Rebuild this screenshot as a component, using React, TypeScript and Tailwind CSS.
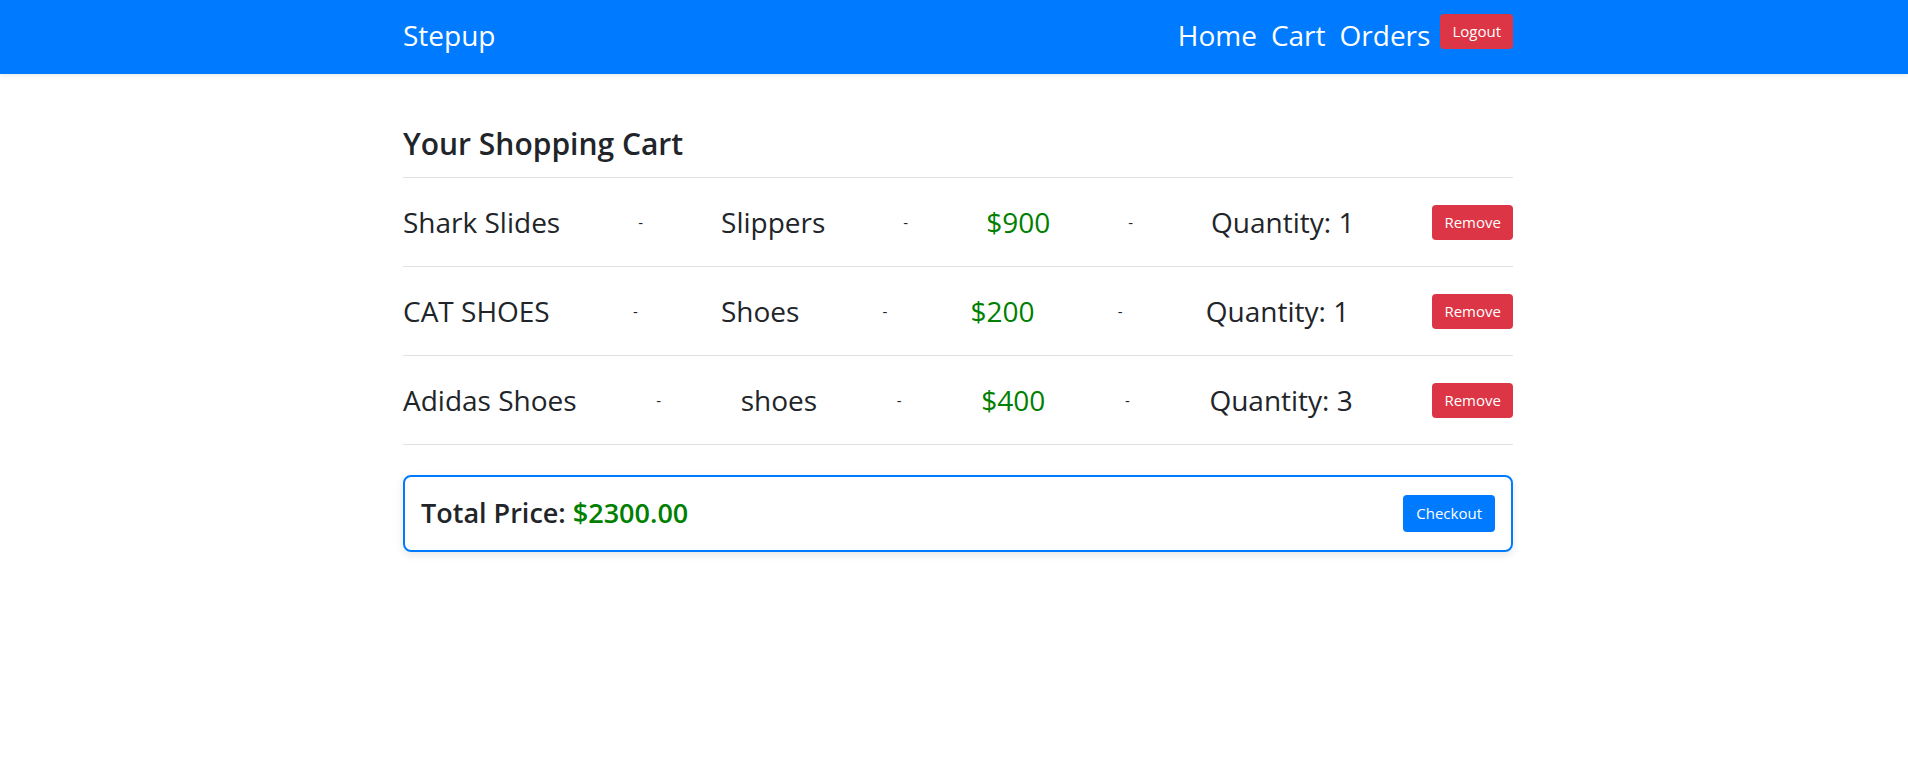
import React from "react";

type CartItem = {
  name: string;
  category: string;
  price: number;
  quantity: number;
};

const cart: CartItem[] = [
  { name: "Shark Slides", category: "Slippers", price: 900, quantity: 1 },
  { name: "CAT SHOES", category: "Shoes", price: 200, quantity: 1 },
  { name: "Adidas Shoes", category: "shoes", price: 400, quantity: 3 },
];

export default function App() {
  const total = cart.reduce((sum, item) => sum + item.price * item.quantity, 0);

  return (
    <div className="min-h-screen bg-white font-['Open_Sans',sans-serif] text-[#212529]">
      <nav className="h-[74px] bg-[#007bff] shadow-[0_2px_4px_rgba(0,0,0,0.08)]">
        <div className="mx-auto flex h-full w-[1118px] items-center justify-between pb-[5px] pl-2">
          <a className="text-[28px] text-white">Stepup</a>
          <div className="flex items-start gap-[14px]">
            <a className="text-[28px] leading-[42px] text-white">Home</a>
            <a className="text-[28px] leading-[42px] text-white">Cart</a>
            <a className="text-[28px] leading-[42px] text-white">Orders</a>
            <button className="ml-[-4px] h-[35px] rounded bg-[#dc3545] px-3 text-[15px] text-white">
              Logout
            </button>
          </div>
        </div>
      </nav>

      <main className="mx-auto w-[1118px] pl-2 pt-[52px]">
        <h2 className="border-b border-[#dee2e6] pb-[15px] text-[30px] font-semibold leading-[1.2]">
          Your Shopping Cart
        </h2>

        <div>
          {cart.map((item) => (
            <div
              key={item.name}
              className="flex h-[89px] items-center justify-between border-b border-[#dee2e6] text-[28px]"
            >
              <span>{item.name}</span>
              <span className="text-[15px]">-</span>
              <span>{item.category}</span>
              <span className="text-[15px]">-</span>
              <span className="text-[#008000]">${item.price}</span>
              <span className="text-[15px]">-</span>
              <span>Quantity: {item.quantity}</span>
              <button className="h-[35px] rounded bg-[#dc3545] px-3 text-[15px] text-white">
                Remove
              </button>
            </div>
          ))}
        </div>

        <div className="mt-[30px] flex h-[77px] items-center justify-between rounded-lg border-2 border-[#007bff] px-4 shadow-[0_3px_8px_rgba(0,0,0,0.1)]">
          <h4 className="text-[27px] font-semibold">
            Total Price: <span className="text-[#008000]">${total.toFixed(2)}</span>
          </h4>
          <button className="h-[37px] rounded bg-[#007bff] px-[13px] text-[15px] text-white">
            Checkout
          </button>
        </div>
      </main>
    </div>
  );
}
